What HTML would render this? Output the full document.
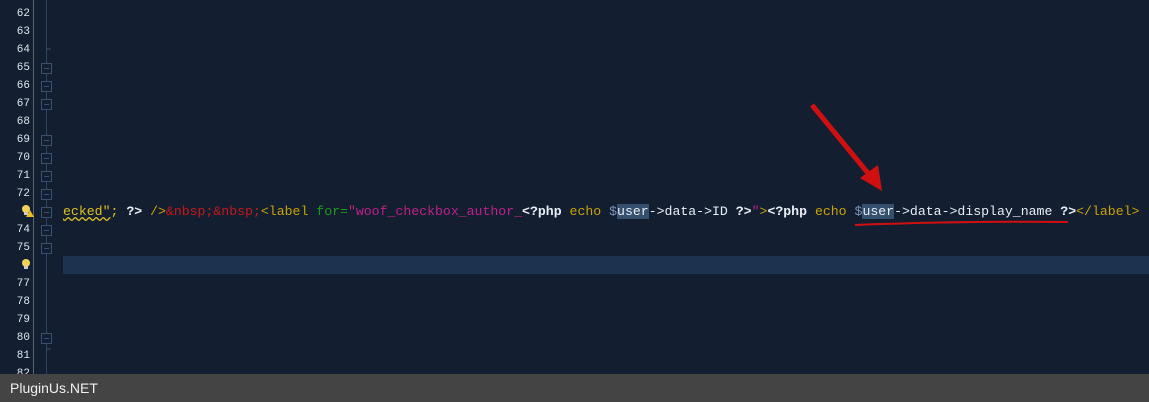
<!DOCTYPE html><html><head><style>
body{margin:0;width:1149px;height:402px;background:#131e30;overflow:hidden;position:relative;font-family:"Liberation Mono",monospace}
.ln{position:absolute;font-size:11px;color:#dfe6ee;line-height:18px;width:30px;text-align:right}
.box{position:absolute;left:41px;width:9px;height:9px;border:1px solid #3a5070;background:#131e30}
.box:after{content:"";position:absolute;left:2px;top:4px;width:5px;height:1px;background:#3a5070}
.code{position:absolute;left:63px;top:203px;font-size:13.2px;line-height:18px;white-space:pre;color:#e8eef5}
.sel{background:#34506e}
</style></head><body>
<div style="position:absolute;left:33px;top:0;width:1px;height:374px;background:#5a6470"></div>
<div style="position:absolute;left:46px;top:0;width:1px;height:374px;background:#2e4562"></div>
<div style="position:absolute;left:63px;top:256px;width:1086px;height:18px;background:#1c3350"></div>
<div id="g"></div>
<div class="code"><span style="color:#e0c020;text-decoration:underline wavy #e0c020">ecked"</span><span style="color:#e0c020">;</span> <span style="font-weight:bold">?&gt;</span> <span style="color:#c9a400">/&gt;</span><span style="color:#c81818">&amp;nbsp;&amp;nbsp;</span><span style="color:#c9a400">&lt;label</span> <span style="color:#1a9a1a">for=</span><span style="color:#c0208a">"woof_checkbox_author_</span><span style="font-weight:bold">&lt;?php</span> <span style="color:#c9a400">echo</span> <span style="color:#7d95b8">$</span><span class="sel">user</span>-&gt;data-&gt;ID <span style="font-weight:bold">?&gt;</span><span style="color:#c0208a">"</span><span style="color:#c9a400">&gt;</span><span style="font-weight:bold">&lt;?php</span> <span style="color:#c9a400">echo</span> <span style="color:#7d95b8">$</span><span class="sel">user</span>-&gt;data-&gt;display_name <span style="font-weight:bold">?&gt;</span><span style="color:#c9a400">&lt;/label&gt;</span></div>
<svg style="position:absolute;left:0;top:0" width="1149" height="374">
<line x1="812" y1="105" x2="872" y2="178" stroke="#d01010" stroke-width="5"/>
<polygon points="882,191 860,178 878,165" fill="#d01010"/>
<path d="M855 225 Q960 221 1068 222" stroke="#d01010" stroke-width="2" fill="none"/>
<line x1="46" y1="49" x2="51" y2="49" stroke="#3a5070"/>
<line x1="46" y1="349" x2="51" y2="349" stroke="#3a5070"/>
<circle cx="26" cy="263" r="4" fill="#f2d35a"/><rect x="24" y="266" width="4" height="3" fill="#ccc"/>
<circle cx="26" cy="209" r="4" fill="#f2d35a"/><rect x="24" y="212" width="4" height="3" fill="#ccc"/>
<polygon points="30,210 34,217 26,217" fill="#e8c020"/>
</svg>
<div style="position:absolute;left:0;top:374px;width:1149px;height:28px;background:#444"><span style="position:absolute;left:10px;top:6px;font-family:'Liberation Sans',sans-serif;font-size:14px;color:#f0f0f0">PluginUs.NET</span></div>
<script>
var g=document.getElementById('g'),h='',folds=[65,66,67,69,70,71,72,73,74,75,80];
for(var i=0;i<21;i++){var n=62+i,t=5+18*i;
if(n!=73&&n!=76)h+='<div class="ln" style="top:'+t+'px;left:0">'+n+'</div>';
if(folds.indexOf(n)>=0)h+='<div class="box" style="top:'+(t+4)+'px"></div>';}
g.innerHTML=h;
</script>
</body></html>
